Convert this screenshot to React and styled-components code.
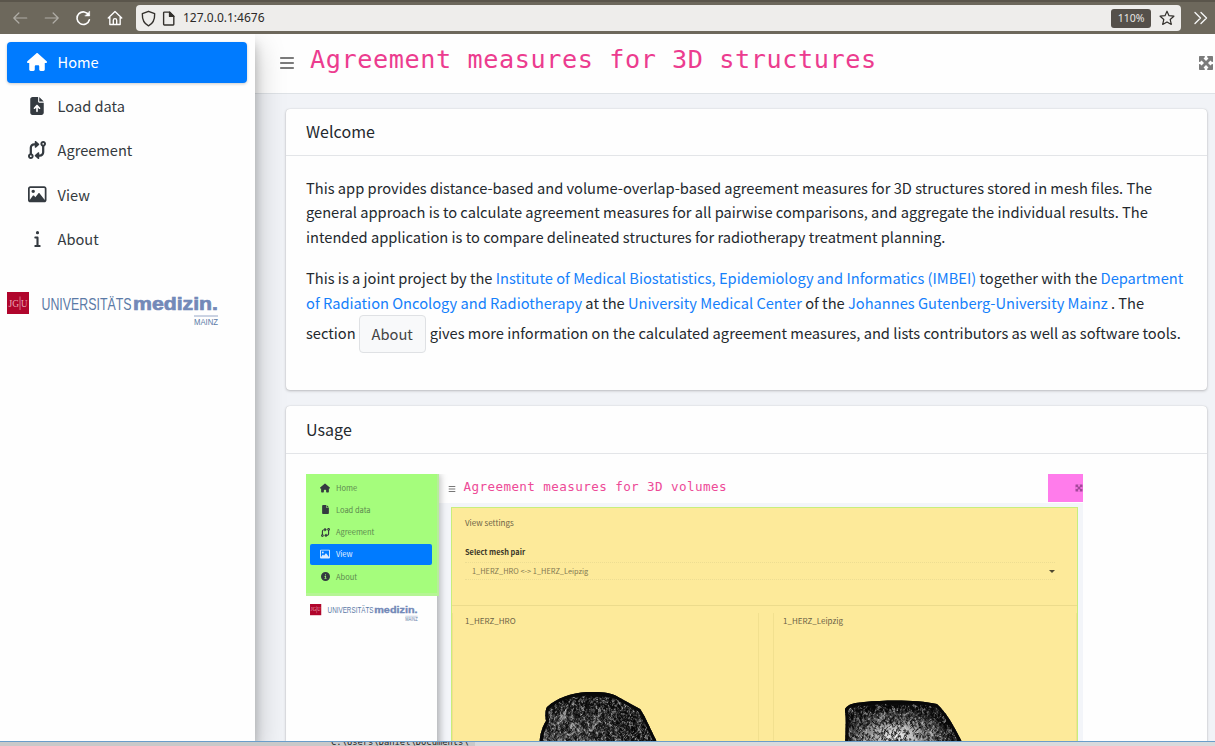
import React from "react";
import styled, { createGlobalStyle } from "styled-components";
import { FaHouse, FaFileArrowUp, FaCodeCompare, FaRegImage, FaInfo, FaMaximize, FaBars, FaFile, FaCircleInfo } from "react-icons/fa6";

const sans = `"Noto Sans CJK SC", "Noto Sans", sans-serif`;
const mono = `"DejaVu Sans Mono", monospace`;

const Global = createGlobalStyle`
  * { box-sizing: border-box; }
  body { margin: 0; background: #f4f6f9; font-family: ${sans}; color: #24292e; overflow: hidden; }
  svg { display: block; flex: none; }
`;

const Screen = styled.div`
  width: 1215px; height: 746px; display: flex; flex-direction: column; overflow: hidden;
`;
const Toolbar = styled.header`
  flex: none; height: 34px; display: flex; align-items: center; background: #6d685c;
  border-top: 2px solid #5a554b; padding: 0 6px 0 11px;
`;
const NavIcons = styled.div`
  display: flex; gap: 13.5px; width: 125px; color: #fff;
`;
const Address = styled.div`
  width: 1045px; height: 26px; border-radius: 4px; background: #eeedeb; display: flex; align-items: center;
  padding: 0 6px 0 4px; color: #33302c;
`;
const Url = styled.span`
  flex: 1; margin-left: 6px; font: 12px/26px "Noto Sans", sans-serif; color: #2c2a28;
`;
const Zoom = styled.span`
  width: 40px; height: 19px; border-radius: 3px; background: #55504a; color: #e8e6e3; text-align: center;
  font: 10.5px/19px "Noto Sans", sans-serif; margin-right: 8px;
`;
const More = styled.div`margin-left: 12px; color: #f5f5f5;`;

const Page = styled.div`flex: 1; min-height: 0; display: flex; overflow: hidden;`;
const Sidebar = styled.aside`
  flex: none; width: 255px; background: #fefefe; padding: 8px 8px 0 7.4px; z-index: 2;
  box-shadow: 0 13px 28px rgba(0,0,0,.25), 0 10px 10px rgba(0,0,0,.2);
`;
const Item = styled.div`
  height: 40.5px; margin-bottom: 3.6px; display: flex; align-items: center; border-radius: 4px;
  font-size: 14.6px; line-height: 24px; color: ${p => (p.$active ? "#fff" : "#343a40")};
  background: ${p => (p.$active ? "#007bff" : "transparent")};
  box-shadow: ${p => (p.$active ? "0 1px 3px rgba(0,0,0,.2)" : "none")};
`;
const Glyph = styled.span`
  width: 27px; margin-left: 16.6px; margin-right: 6.6px; display: flex; justify-content: center;
`;

const LogoRow = styled.div`
  display: flex; align-items: flex-start; padding: ${p => (p.$small ? "8px 0 0 4px" : "29.5px 0 0")};
`;
const Main = styled.main`flex: 1; min-width: 0; display: flex; flex-direction: column; background: #f1f3f7;`;
const TopBar = styled.div`
  flex: none; height: 60px; background: #fefefe; border-bottom: 1px solid #dee2e6; display: flex;
  align-items: center; padding: 0 1px 2px 24px; color: #7b7b7b;
`;
const Title = styled.h1`
  flex: 1; margin: -6px 0 0 15px; font: 400 25.2px/34px ${mono}; letter-spacing: 0.58px; color: #ec3c8f;
  white-space: pre;
`;
const Content = styled.div`flex: none; padding: 15px 8px 0 31px; display: flex; flex-direction: column; gap: 16px;`;
const Card = styled.section`
  background: #fefefe; border-radius: 4px; height: ${p => p.$h}px;
  box-shadow: 0 0 1px rgba(0,0,0,.2), 0 1px 3px rgba(0,0,0,.22);
`;
const CardHead = styled.h2`
  margin: 0; height: ${p => p.$h}px; padding: 0 20px; border-bottom: 1px solid #e3e5e8; font-weight: 400;
  font-size: 16px; line-height: ${p => p.$lh}px; letter-spacing: .05px;
`;
const CardBody = styled.div`padding: 20px; font-size: 14.66px; line-height: 24.4px; white-space: nowrap;`;
const Para = styled.p`margin: 0 0 17px;`;
const Line = styled.span`display: flex; align-items: baseline; white-space: pre;`;
const ButtonLine = styled(Line)`align-items: center; height: 38px; line-height: 34px; padding-bottom: 0;`;
const Lifted = styled.span`padding-bottom: 2px;`;
const Link = styled.a`color: #1580fb;`;
const About = styled.span`
  display: inline-block; height: 38px; width: 67px; margin: 0 4px 0 3px; border: 1px solid #dfe1e4; border-radius: 4px;
  background: #f8f9fa; color: #444; text-align: center; line-height: 35px;
`;

const Shot = styled.div`width: 777px; height: 300px; display: flex; background: #f3f5f9; overflow: hidden;`;
const ShotSide = styled.div`
  width: 131px; background: #fefefe; z-index: 1; box-shadow: 3px 0 7px rgba(0,0,0,.28);
`;
const ShotMenu = styled.div`
  height: 122px; width: 133px; background: #a5fd7c; padding: 3px 0 0 4px; border-bottom: 3px solid #b5f594;
  border-right: 2px solid #b7ee9a; 
`;
const ShotItem = styled.div`
  width: 122px; height: 21px; margin-bottom: 1.3px; padding-left: 9px; display: flex; align-items: center; gap: 5px; border-radius: 2px;
  font-size: 7.5px; line-height: 14px; color: ${p => (p.$active ? "#e4f1ff" : "#5d8a50")};
  background: ${p => (p.$active ? "#007bff" : "transparent")};
  svg { color: ${p => (p.$active ? "#dcecff" : "#343a40")}; }
`;
const ShotIcon = styled.span`width: 12px; display: flex; justify-content: center;`;
const ShotMain = styled.div`flex: 1; display: flex; flex-direction: column;`;
const ShotBar = styled.div`
  height: 29px; background: #fefefe; display: flex; align-items: center; padding-left: 11px; color: #777;
`;
const ShotTitle = styled.span`
  flex: 1; margin-left: 7.5px; margin-top: -3px; font: 12.6px/20px ${mono}; letter-spacing: .4px; color: #ed4a97; white-space: pre;
`;
const Pink = styled.span`
  width: 36px; height: 28px; background: #ff7ceb; color: #a3479a; align-self: flex-start;
  display: flex; align-items: center; justify-content: flex-end; padding-right: 1px;
`;
const Yellow = styled.div`
  flex: 1; margin: 4px 6px 0 14px; background: #fdea9a; border: 1px solid #c8ee7c; border-bottom: 0; color: #6b6246;
  font-size: 8px; line-height: 12px; display: flex; flex-direction: column;
`;
const Settings = styled.div`height: 98px; padding: 9px 22px 0 13px; border-bottom: 1px solid #ecdb8c;`;
const MeshLabel = styled.div`margin-top: 17px; font-weight: 700; color: #3a3628; font-size: 7.4px;`;
const Select = styled.div`
  margin-top: 4px; height: 18px; border-top: 1px dotted #eddd92; border-bottom: 1px dotted #eddd92;
  display: flex; align-items: center; justify-content: space-between; padding: 0 0 0 7px; color: #827751; font-size: 7.4px;
`;
const Caret = styled.i`border: 3px solid transparent; border-top-color: #4f4830; border-bottom: 0;`;
const Panels = styled.div`flex: 1; display: flex; gap: 14px; padding-top: 7px;`;
const Panel = styled.div`
  width: ${p => p.$w}px; border-right: 1px solid #f2e08f; border-left: 1px solid #f2e08f;
  padding: 2px 0 0 ${p => p.$pad}px; display: flex; flex-direction: column;
`;
const MeshWrap = styled.div`margin: ${p => p.$top}px 0 0 ${p => p.$left}px;`;

const Footer = styled.footer`
  flex: none; height: 5px; border-top: 1px solid #6a9dca; background: linear-gradient(90deg, #c9c9c9 0 475px, #d9dadc 475px);
  overflow: hidden; font: 8.8px/10px ${mono}; color: #222;
`;
const FooterText = styled.div`margin: -5.5px 0 0 331px;`;

function Stroke({ size = 16, w = 1.4, children, ...rest }) {
  return (
    <svg width={size} height={size} viewBox="0 0 16 16" fill="none" stroke="currentColor" strokeWidth={w}
      strokeLinecap="round" strokeLinejoin="round" {...rest}>{children}</svg>
  );
}

function Logo({ k = 1 }) {
  return (
    <svg width={216 * k} height={37 * k} viewBox="0 0 216 37">
      <rect x="0" y="0" width="22" height="22" fill="#b0052c" />
      <g fill="#eaa9b6" fontFamily="Liberation Serif, serif" fontSize="10">
        <text x="1.5" y="14.5" textLength="10.5" lengthAdjust="spacingAndGlyphs">JG</text>
        <text x="14" y="14.5" textLength="6.5" lengthAdjust="spacingAndGlyphs">U</text>
      </g>
      <path d="M13 4.5V18" stroke="#eaa9b6" strokeWidth=".7" />
      <text x="34.5" y="17.5" fontFamily="Liberation Sans, sans-serif" fontSize="16.5" fill="#5b7aa6" textLength="90" lengthAdjust="spacingAndGlyphs">UNIVERSITÄTS</text>
      <text x="126" y="17.5" fontFamily="Liberation Sans, sans-serif" fontWeight="700" fontSize="19" fill="#7389b8" stroke="#7389b8" strokeWidth=".7" textLength="85" lengthAdjust="spacingAndGlyphs">medizin.</text>
      <path d="M187 24H211" stroke="#7d93ba" strokeWidth=".8" />
      <text x="187" y="32.5" fontFamily="Liberation Sans, sans-serif" fontSize="9" fill="#5b7aa6" textLength="24" lengthAdjust="spacingAndGlyphs">MAINZ</text>
    </svg>
  );
}

// Wireframe lines scattered over a shape, from a small seeded generator.
function wires(seed, count, w, h, y0) {
  let s = seed;
  const r = () => ((s = (s * 16807) % 2147483647) / 2147483647);
  let d = "";
  for (let i = 0; i < count; i++) {
    const x = r() * w, y = y0 + r() * (h - y0);
    d += `M${x.toFixed(1)} ${y.toFixed(1)}l${(r() * 5 - 2.5).toFixed(1)} ${(r() * 5 - 2).toFixed(1)}l${(r() * 3 - 1.5).toFixed(1)} ${(r() * 3).toFixed(1)}`;
  }
  return d;
}

function Mesh({ id, shape, seed, glow, light }) {
  return (
    <svg width="122" height="60" viewBox="0 0 122 60">
      <defs>
        <clipPath id={id}><path d={shape} /></clipPath>
        <radialGradient id={id + "g"} cx={glow.x} cy={glow.y} r={glow.r}>
          <stop offset="0" stopColor="#fff" stopOpacity={glow.o} />
          <stop offset="1" stopColor="#fff" stopOpacity="0" />
        </radialGradient>
      </defs>
      <path d={shape} fill="#0d0d0d" />
      <g clipPath={`url(#${id})`}>
        <rect width="122" height="60" fill={`url(#${id}g)`} />
        <path d={wires(seed, light, 122, 60, 5)} stroke="#ddd" strokeWidth=".5" fill="none" opacity=".65" />
        <path d={wires(seed + 9101, 1300, 122, 60, 4)} stroke="#080808" strokeWidth=".65" fill="none" />
        <path d={shape} fill="none" stroke="#080808" strokeWidth="6" />
      </g>
    </svg>
  );
}

const menu = [
  ["Home", <FaHouse size={20} />],
  ["Load data", <FaFileArrowUp size={18} />],
  ["Agreement", <FaCodeCompare size={18} />],
  ["View", <FaRegImage size={18.5} />],
  ["About", <FaInfo size={17} />],
];
const shotMenu = [
  ["Home", <FaHouse size={10} />],
  ["Load data", <FaFile size={9} />],
  ["Agreement", <FaCodeCompare size={9} />],
  ["View", <FaRegImage size={10} />],
  ["About", <FaCircleInfo size={9} />],
];

export default function App() {
  return (
    <Screen>
      <Global />
      <Toolbar>
        <NavIcons>
          <Stroke size={18} w={1.1} opacity=".45"><path d="M14 8H2.5M7 3.500 2.500 8 7 12.500" /></Stroke>
          <Stroke size={18} w={1.1} opacity=".45"><path d="M2 8h11.5M9 3.500 13.500 8 9 12.500" /></Stroke>
          <Stroke size={18} w={1.4}><path d="M13.200 5.500A5.600 5.600 0 1 0 13.700 9.500" /><path d="M13.900 2.200v4H9.900Z" fill="currentColor" strokeWidth=".5" /></Stroke>
          <Stroke size={18} w={1.2}><path d="M2 8 8 2.200 14 8M3.400 7v6.800h9.200V7M6.500 13.800V10a1.500 1.500 0 0 1 3 0v3.800" /></Stroke>
        </NavIcons>
        <Address>
          <Stroke size={17} w={1.3}><path d="M8 1.200 13.800 3.500C14 9 11.800 13 8 14.900 4.200 13 2 9 2.200 3.500Z" /></Stroke>
          <Stroke size={17} w={1.3} style={{ marginLeft: 3 }}><path d="M4.200 2h5L13 5.800v7.700c0 .4-.2.600-.600.600H4.200c-.5 0-.8-.3-.8-.7V2.700c0-.4.300-.7.800-.7Z" /><path d="M9 2v4h4Z" fill="currentColor" /></Stroke>
          <Url>127.0.0.1:4676</Url>
          <Zoom>110%</Zoom>
          <Stroke size={16} w={1.2}><path d="m8 1.200 2 4.500 4.900.5-3.700 3.300 1.100 4.900L8 11.900l-4.300 2.500 1.100-4.900L1.100 6.200 6 5.700Z" /></Stroke>
        </Address>
        <More><Stroke size={16} w={1.4}><path d="M2 2.500 7.500 8 2 13.500M8 2.500 13.500 8 8 13.500" /></Stroke></More>
      </Toolbar>
      <Page>
        <Sidebar>
          {menu.map(([t, icon], i) => (
            <Item key={t} $active={i === 0}><Glyph>{icon}</Glyph>{t}</Item>
          ))}
          <LogoRow><Logo /></LogoRow>
        </Sidebar>
        <Main>
          <TopBar>
            <FaBars size={16} />
            <Title>Agreement measures for 3D structures</Title>
            <FaMaximize size={16} />
          </TopBar>
          <Content>
            <Card $h={281}>
              <CardHead $h={47} $lh={44}>Welcome</CardHead>
              <CardBody>
                <Para>
                  <Line>This app provides distance-based and volume-overlap-based agreement measures for 3D structures stored in mesh files. The</Line>
                  <Line>general approach is to calculate agreement measures for all pairwise comparisons, and aggregate the individual results. The</Line>
                  <Line>intended application is to compare delineated structures for radiotherapy treatment planning.</Line>
                </Para>
                <Para>
                  <Line>This is a joint project by the <Link>Institute of Medical Biostatistics, Epidemiology and Informatics (IMBEI)</Link> together with the <Link>Department</Link></Line>
                  <Line><Link>of Radiation Oncology and Radiotherapy</Link> at the <Link>University Medical Center</Link> of the <Link>Johannes Gutenberg-University Mainz</Link> . The</Line>
                  <ButtonLine><Lifted>section</Lifted><About>About</About><Lifted>gives more information on the calculated agreement measures, and lists contributors as well as software tools.</Lifted></ButtonLine>
                </Para>
              </CardBody>
            </Card>
            <Card $h={380}>
              <CardHead $h={48} $lh={46}>Usage</CardHead>
              <CardBody>
                <Shot>
                  <ShotSide>
                    <ShotMenu>
                      {shotMenu.map(([t, icon]) => (
                        <ShotItem key={t} $active={t === "View"}><ShotIcon>{icon}</ShotIcon>{t}</ShotItem>
                      ))}
                    </ShotMenu>
                    <LogoRow $small><Logo k={0.51} /></LogoRow>
                  </ShotSide>
                  <ShotMain>
                    <ShotBar>
                      <FaBars size={8} />
                      <ShotTitle>Agreement measures for 3D volumes</ShotTitle>
                      <Pink><FaMaximize size={8} /></Pink>
                    </ShotBar>
                    <Yellow>
                      <Settings>
                        View settings
                        <MeshLabel>Select mesh pair</MeshLabel>
                        <Select>1_HERZ_HRO &lt;-&gt; 1_HERZ_Leipzig<Caret /></Select>
                      </Settings>
                      <Panels>
                        <Panel $w={307} $pad={12}>
                          1_HERZ_HRO
                          <MeshWrap $top={65} $left={72}>
                            <Mesh id="hro" seed={71771} light={2100} glow={{ x: 0.2, y: 0.75, r: 0.6, o: 0.3 }}
                              shape="M2 60C2 44 5 35 9 29C8 24 8 19 10 15C20 6 34 1 50 0C66-.5 76 1 83 6L103 17C107 22 113 36 119 48L122 60Z" />
                          </MeshWrap>
                        </Panel>
                        <Panel $w={304} $pad={9}>
                          1_HERZ_Leipzig
                          <MeshWrap $top={73} $left={61}>
                            <Mesh id="leipzig" seed={409409} light={1500} glow={{ x: 0.42, y: 0.6, r: 0.45, o: 1 }}
                              shape="M2 60C0 45 3 25 1 9C4 4 10 3 20 2C45-.5 75 0 93 4C102 12 110 26 118 42L122 60Z" />
                          </MeshWrap>
                        </Panel>
                      </Panels>
                    </Yellow>
                  </ShotMain>
                </Shot>
              </CardBody>
            </Card>
          </Content>
        </Main>
      </Page>
      <Footer><FooterText>C:\Users\Daniel\Documents\</FooterText></Footer>
    </Screen>
  );
}
